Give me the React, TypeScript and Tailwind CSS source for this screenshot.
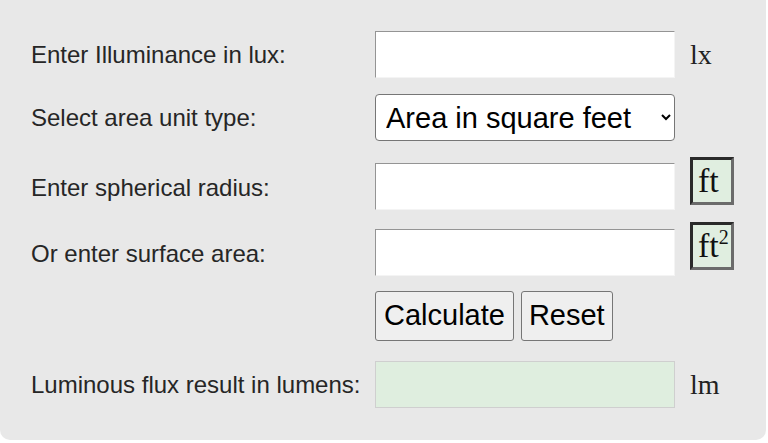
const inputCls =
  "w-[300px] h-[47px] bg-white border border-t-[#949494] border-l-[#949494] border-b-[#f4f4f4] border-r-[#f4f4f4] px-2 text-[28px] outline-none";

const labelCls = "w-[344px] shrink-0 text-[24px] text-[#262626]";

const UnitBox = ({ children }: { children: React.ReactNode }) => (
  <div className="ml-[15px] w-[44px] h-[48px] flex items-center pl-[5px] bg-[#e0eee0] border-[3px] border-t-[#2a2a2a] border-l-[#2a2a2a] border-b-[#6b6b6b] border-r-[#6b6b6b] font-['Liberation_Serif',serif] text-[34px] leading-none text-[#111]">
    {children}
  </div>
);

const UnitText = ({ children }: { children: React.ReactNode }) => (
  <span className="ml-[15px] font-['Liberation_Serif',serif] text-[28px] text-[#222]">{children}</span>
);

export default function App() {
  return (
    <div className="w-[768px] h-[443px] bg-white font-['Liberation_Sans',Arial,sans-serif]">
      <div className="w-[766px] h-[440px] bg-[#e8e8e8] rounded-b-[10px] pl-[31px] pt-[31px] flex flex-col">
        <div className="flex items-center h-[47px]">
          <label className={labelCls}>Enter Illuminance in lux:</label>
          <input type="text" className={inputCls} />
          <UnitText>lx</UnitText>
        </div>

        <div className="flex items-center h-[47px] mt-[16px]">
          <label className={labelCls}>Select area unit type:</label>
          <select className="w-[300px] h-[47px] bg-white border border-[#767676] rounded-[4px] pl-[6px] pr-2 text-[29px] text-black">
            <option>Area in square feet</option>
            <option>Area in square meters</option>
          </select>
        </div>

        <div className="flex items-start h-[53px] mt-[16px]">
          <label className={labelCls + " mt-[13px]"}>Enter spherical radius:</label>
          <input type="text" className={inputCls + " mt-[6px]"} />
          <UnitBox>ft</UnitBox>
        </div>

        <div className="flex items-start h-[54px] mt-[12px]">
          <label className={labelCls + " mt-[14px]"}>Or enter surface area:</label>
          <input type="text" className={inputCls + " mt-[7px]"} />
          <UnitBox>
            <span>
              ft<sup className="text-[20px] -top-[13px]">2</sup>
            </span>
          </UnitBox>
        </div>

        <div className="flex items-center h-[50px] mt-[15px] pl-[344px] gap-[7px]">
          <button className="h-[50px] px-[8px] bg-[#efefef] border border-[#767676] rounded-[3px] text-[29px] text-black">
            Calculate
          </button>
          <button className="h-[50px] px-[7px] bg-[#efefef] border border-[#767676] rounded-[3px] text-[29px] text-black">
            Reset
          </button>
        </div>

        <div className="flex items-center h-[47px] mt-[20px]">
          <label className={labelCls}>Luminous flux result in lumens:</label>
          <div className="w-[300px] h-[47px] bg-[#dfeedf] border border-[#cfcfcf]" />
          <UnitText>lm</UnitText>
        </div>
      </div>
    </div>
  );
}
